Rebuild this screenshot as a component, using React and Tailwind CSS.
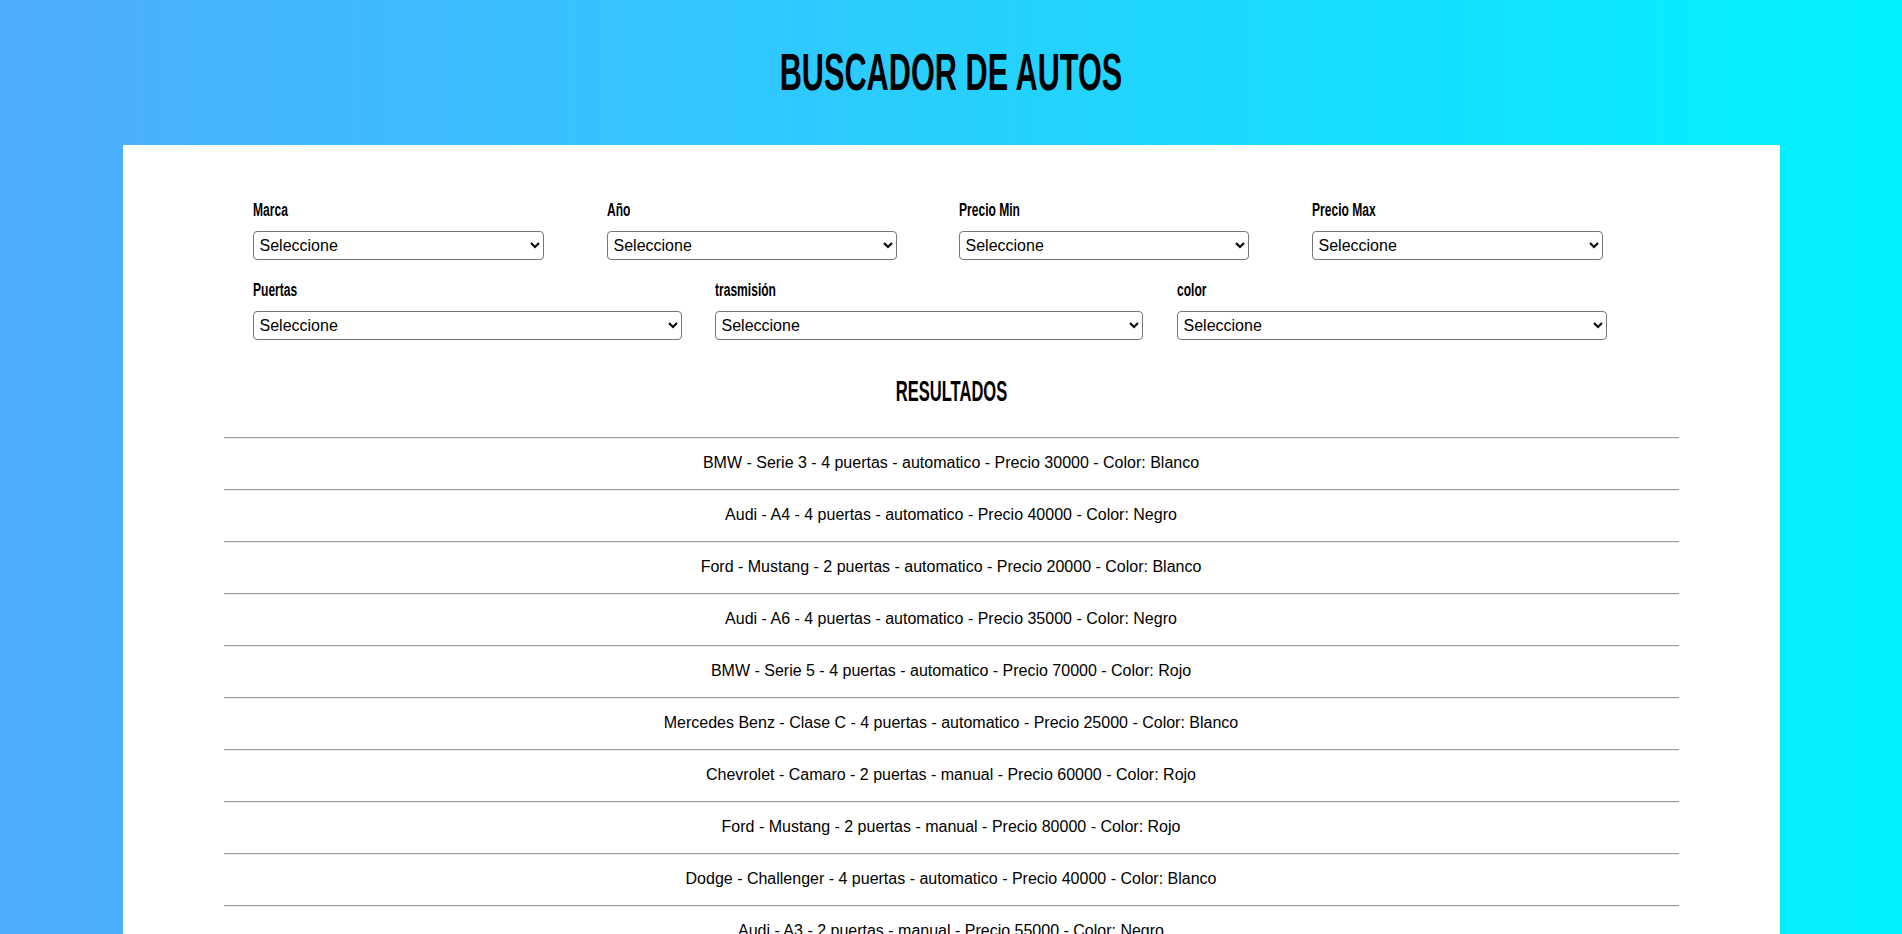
import React from 'react';

const autos = [
  'BMW - Serie 3 - 4 puertas - automatico - Precio 30000 - Color: Blanco',
  'Audi - A4 - 4 puertas - automatico - Precio 40000 - Color: Negro',
  'Ford - Mustang - 2 puertas - automatico - Precio 20000 - Color: Blanco',
  'Audi - A6 - 4 puertas - automatico - Precio 35000 - Color: Negro',
  'BMW - Serie 5 - 4 puertas - automatico - Precio 70000 - Color: Rojo',
  'Mercedes Benz - Clase C - 4 puertas - automatico - Precio 25000 - Color: Blanco',
  'Chevrolet - Camaro - 2 puertas - manual - Precio 60000 - Color: Rojo',
  'Ford - Mustang - 2 puertas - manual - Precio 80000 - Color: Rojo',
  'Dodge - Challenger - 4 puertas - automatico - Precio 40000 - Color: Blanco',
  'Audi - A3 - 2 puertas - manual - Precio 55000 - Color: Negro',
];

function Campo({ label, ancho }) {
  return (
    <div>
      <label className="block h-[20px] leading-[20px] mb-[11px] font-['Liberation_Sans',Arial,sans-serif] text-[18px] font-bold text-black">
        <span className="inline-block origin-left scale-x-[0.67]">{label}</span>
      </label>
      <select
        className={`${ancho} block h-[29px] pl-[2px] pr-[4px] bg-white border border-[#767676] rounded-[4px] font-['Liberation_Sans',Arial,sans-serif] text-[16px] text-black`}
        defaultValue=""
      >
        <option value="">Seleccione</option>
      </select>
    </div>
  );
}

export default function App() {
  return (
    <div className="min-h-screen bg-[linear-gradient(to_right,#4facfe,#00f2fe)]">
      {/* Encabezado */}
      <header className="pt-[46px] pb-[47px]">
        <h1 className="text-center text-[52px] leading-[52px] font-bold text-black font-['Liberation_Sans',Arial,sans-serif] scale-x-[0.59]">
          BUSCADOR DE AUTOS
        </h1>
      </header>

      <main className="w-[1657px] mx-auto bg-white px-[101px] pt-[55px] pb-[40px]">
        {/* Filtros */}
        <div className="ml-[29px]">
          <div className="grid grid-cols-[354px_352px_353px_300px]">
            <Campo label="Marca" ancho="w-[291px]" />
            <Campo label="Año" ancho="w-[290px]" />
            <Campo label="Precio Min" ancho="w-[290px]" />
            <Campo label="Precio Max" ancho="w-[291px]" />
          </div>
          <div className="grid grid-cols-[462px_462px_440px] mt-[20px]">
            <Campo label="Puertas" ancho="w-[429px]" />
            <Campo label="trasmisión" ancho="w-[428px]" />
            <Campo label="color" ancho="w-[430px]" />
          </div>
        </div>

        {/* Resultados */}
        <h2 className="mt-[36px] text-center text-[29px] leading-[30px] font-bold text-black font-['Liberation_Sans',Arial,sans-serif] scale-x-[0.57]">
          RESULTADOS
        </h2>

        <div className="mt-[31px]">
          {autos.map((auto, i) => (
            <div key={i} className="border-t border-t-[#9a9a9a]">
              <div className="border-t border-t-[#eeeeee] pt-[15px] pb-[17px] text-center text-[16px] leading-[18px] text-black font-['Liberation_Sans',Arial,sans-serif]">
                {auto}
              </div>
            </div>
          ))}
        </div>
      </main>
    </div>
  );
}
